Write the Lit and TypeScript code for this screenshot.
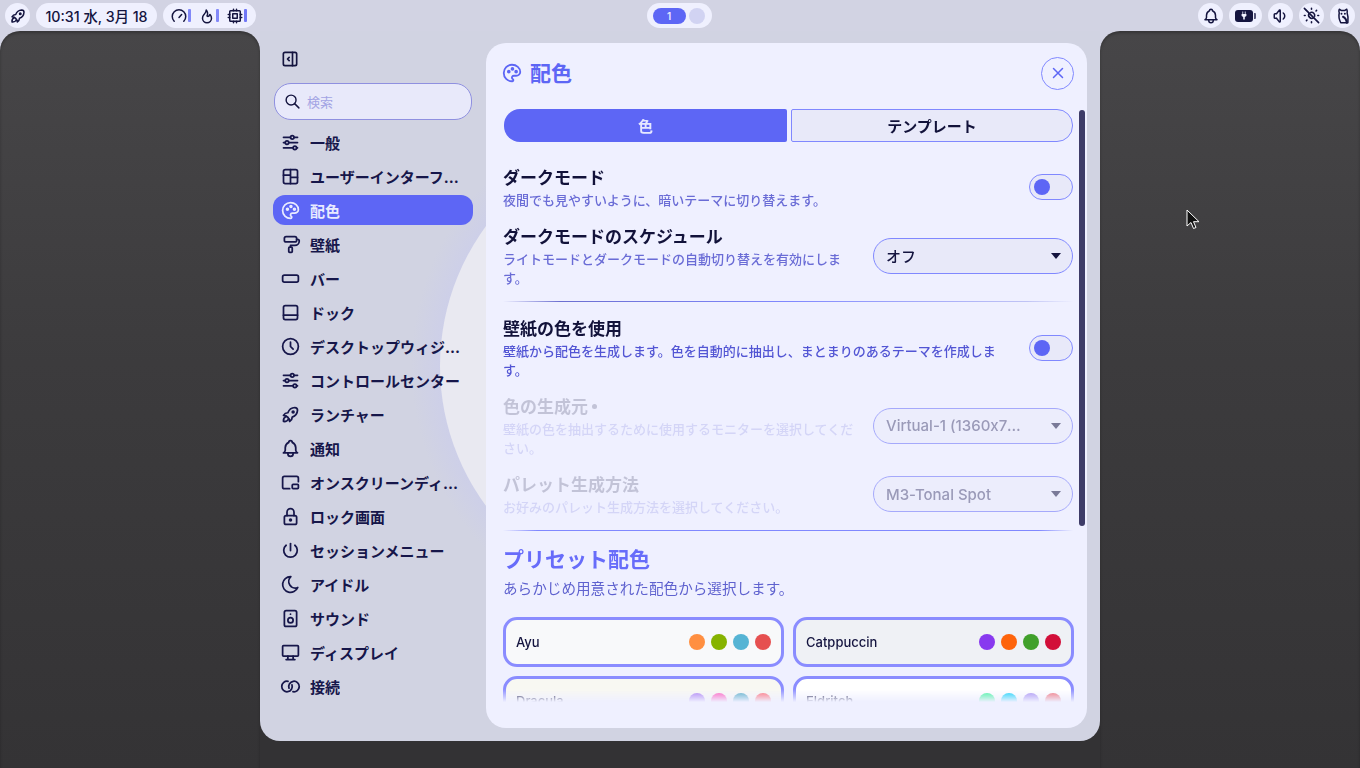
import { LitElement, html, css, svg } from "lit";
import { customElement } from "lit/decorators.js";

const ic: Record<string, any> = {
  rocket: svg`<path d="M4 13a8 8 0 0 1 7 7a6 6 0 0 0 3 -5a9 9 0 0 0 6 -8a3 3 0 0 0 -3 -3a9 9 0 0 0 -8 6a6 6 0 0 0 -5 3"/><path d="M7 14a6 6 0 0 0 -3 6a6 6 0 0 0 6 -3"/><path d="M15 9m-1 0a1 1 0 1 0 2 0a1 1 0 1 0 -2 0"/>`,
  gauge: svg`<path d="M5.6 19a9 9 0 1 1 12.8 0"/><path d="M12 14l3.5 -4"/>`,
  flame: svg`<path d="M12 12c2 -2.96 0 -7 -1 -8c0 3.038 -1.773 4.741 -3 6c-1.226 1.26 -2 3.24 -2 5a6 6 0 1 0 12 0c0 -1.532 -1.056 -3.94 -2 -5c-1.786 3 -2.791 3 -4 2z"/>`,
  cpu: svg`<path d="M5 5m0 1a1 1 0 0 1 1 -1h12a1 1 0 0 1 1 1v12a1 1 0 0 1 -1 1h-12a1 1 0 0 1 -1 -1z"/><path d="M9 9h6v6h-6z"/><path d="M3 10h2M3 14h2M10 3v2M14 3v2M21 10h-2M21 14h-2M14 21v-2M10 21v-2"/>`,
  bell: svg`<path d="M10 5a2 2 0 1 1 4 0a7 7 0 0 1 4 6v3a4 4 0 0 0 2 3h-16a4 4 0 0 0 2 -3v-3a7 7 0 0 1 4 -6"/><path d="M9 17v1a3 3 0 0 0 6 0v-1"/>`,
  volume: svg`<path d="M15 8a5 5 0 0 1 0 8"/><path d="M6 15h-2a1 1 0 0 1 -1 -1v-4a1 1 0 0 1 1 -1h2l3.5 -4.5a.8 .8 0 0 1 1.5 .5v14a.8 .8 0 0 1 -1.5 .5l-3.5 -4.5"/>`,
  sunoff: svg`<path d="M3 3l18 18"/><path d="M9.2 9.2a4 4 0 0 0 5.6 5.6M11 8.1a4 4 0 0 1 4.9 4.9"/><path d="M12 3v1M12 20v1M3 12h1M20 12h1M5.6 18.4l.7 -.7M17.7 6.3l.7 -.7M5.6 5.6l0 0"/>`,
  owl: svg`<path d="M7 3l2.5 1.500h5L17 3c1 2 1 3 .5 5c1.500 4 1.500 9 1 13H9c-2 -4 -3 -9 -2 -13c-.7 -2 -.8 -3.500 0 -5z"/><path d="M10 9h.01M14.500 9h.01M12 13c2.500 1 4.500 4 5 8" stroke-width="2.600"/>`,
  sliders: svg`<path d="M14 6m-2 0a2 2 0 1 0 4 0a2 2 0 1 0 -4 0"/><path d="M4 6l8 0M16 6l4 0"/><path d="M8 12m-2 0a2 2 0 1 0 4 0a2 2 0 1 0 -4 0"/><path d="M4 12l2 0M10 12l10 0"/><path d="M17 18m-2 0a2 2 0 1 0 4 0a2 2 0 1 0 -4 0"/><path d="M4 18l11 0M19 18l1 0"/>`,
  layout: svg`<rect x="4" y="4" width="16" height="16" rx="2"/><path d="M12 4v16M4 10.500h8M12 13h8"/>`,
  palette: svg`<path d="M12 21a9 9 0 0 1 0 -18c4.970 0 9 3.582 9 8c0 1.060 -.474 2.078 -1.318 2.828c-.844 .75 -1.989 1.172 -3.182 1.172h-2.500a2 2 0 0 0 -1 3.750a1.300 1.300 0 0 1 -1 2.250"/><path d="M8.500 10.500m-1 0a1 1 0 1 0 2 0a1 1 0 1 0 -2 0"/><path d="M12.500 7.500m-1 0a1 1 0 1 0 2 0a1 1 0 1 0 -2 0"/><path d="M16.500 10.500m-1 0a1 1 0 1 0 2 0a1 1 0 1 0 -2 0"/>`,
  roller: svg`<path d="M5 3m0 2a2 2 0 0 1 2 -2h10a2 2 0 0 1 2 2v2a2 2 0 0 1 -2 2h-10a2 2 0 0 1 -2 -2z"/><path d="M19 6h1a2 2 0 0 1 2 2a5 5 0 0 1 -5 5h-5v2"/><path d="M10 15m0 1a1 1 0 0 1 1 -1h2a1 1 0 0 1 1 1v4a1 1 0 0 1 -1 1h-2a1 1 0 0 1 -1 -1z"/>`,
  bar: svg`<rect x="3" y="8" width="18" height="8" rx="2"/>`,
  dock: svg`<rect x="4" y="4" width="16" height="16" rx="2"/><path d="M4 15h16"/>`,
  clock: svg`<circle cx="12" cy="12" r="9"/><path d="M12 7v5l3 3"/>`,
  osd: svg`<path d="M11 19h-6a2 2 0 0 1 -2 -2v-10a2 2 0 0 1 2 -2h14a2 2 0 0 1 2 2v4"/><path d="M14 14m0 1a1 1 0 0 1 1 -1h5a1 1 0 0 1 1 1v3a1 1 0 0 1 -1 1h-5a1 1 0 0 1 -1 -1z"/>`,
  lock: svg`<path d="M5 13a2 2 0 0 1 2 -2h10a2 2 0 0 1 2 2v6a2 2 0 0 1 -2 2h-10a2 2 0 0 1 -2 -2v-6z"/><path d="M11 16a1 1 0 1 0 2 0a1 1 0 0 0 -2 0"/><path d="M8 11v-4a4 4 0 1 1 8 0v4"/>`,
  power: svg`<path d="M7 6a7.750 7.750 0 1 0 10 0"/><path d="M12 4l0 8"/>`,
  moon: svg`<path d="M12 3c.132 0 .263 0 .393 0a7.500 7.500 0 0 0 7.920 12.446a9 9 0 1 1 -8.313 -12.454z"/>`,
  speaker: svg`<path d="M5 3m0 2a2 2 0 0 1 2 -2h10a2 2 0 0 1 2 2v14a2 2 0 0 1 -2 2h-10a2 2 0 0 1 -2 -2z"/><path d="M12 14m-3 0a3 3 0 1 0 6 0a3 3 0 1 0 -6 0"/><path d="M12 7l0 .01"/>`,
  desktop: svg`<path d="M3 5a1 1 0 0 1 1 -1h16a1 1 0 0 1 1 1v10a1 1 0 0 1 -1 1h-16a1 1 0 0 1 -1 -1v-10z"/><path d="M7 20h10M9 16v4M15 16v4"/>`,
  link: svg`<path d="M9.183 6.117a6 6 0 1 0 4.511 3.986"/><path d="M14.813 17.883a6 6 0 1 0 -4.496 -3.954"/>`,
  collapse: svg`<path d="M4 4m0 2a2 2 0 0 1 2 -2h12a2 2 0 0 1 2 2v12a2 2 0 0 1 -2 2h-12a2 2 0 0 1 -2 -2z"/><path d="M15 4v16M11 10l-2 2l2 2"/>`,
  search: svg`<path d="M10 10m-7 0a7 7 0 1 0 14 0a7 7 0 1 0 -14 0"/><path d="M21 21l-6 -6"/>`,
  x: svg`<path d="M18 6l-12 12M6 6l12 12"/>`,
};

const icon = (n: string, size = 21) =>
  html`<svg class="ico" width=${size} height=${size} viewBox="0 0 24 24" fill="none" stroke="currentColor" stroke-width="2" stroke-linecap="round" stroke-linejoin="round">${ic[n]}</svg>`;

const nav: [string, string][] = [
  ["sliders", "一般"],
  ["layout", "ユーザーインターフェース"],
  ["palette", "配色"],
  ["roller", "壁紙"],
  ["bar", "バー"],
  ["dock", "ドック"],
  ["clock", "デスクトップウィジェット"],
  ["sliders", "コントロールセンター"],
  ["rocket", "ランチャー"],
  ["bell", "通知"],
  ["osd", "オンスクリーンディスプレイ"],
  ["lock", "ロック画面"],
  ["power", "セッションメニュー"],
  ["moon", "アイドル"],
  ["speaker", "サウンド"],
  ["desktop", "ディスプレイ"],
  ["link", "接続"],
];

const presets: [string, string, string[]][] = [
  ["Ayu", "#f8f9fa", ["#ff8f40", "#86b300", "#55b4d4", "#e65050"]],
  ["Catppuccin", "#eff1f5", ["#8839ef", "#fe640b", "#40a02b", "#d20f39"]],
  ["Dracula", "#f8f8f2", ["#a97cf2", "#ff55bb", "#4fa9c4", "#ff6670"]],
  ["Eldritch", "#ffffff", ["#37f499", "#04d1f9", "#a48cf2", "#f16c75"]],
];

@customElement("app-root")
export class AppRoot extends LitElement {
  static styles = css`
    :host {
      display: block;
      position: relative;
      width: 1360px;
      height: 768px;
      overflow: hidden;
      background: #d2d3e3;
      color: #14143f;
      font-family: Inter, "Noto Sans CJK JP", sans-serif;
    }
    .ico { display: block; flex: none; }

    /* top bar */
    .bar {
      height: 31px;
      display: grid;
      grid-template-columns: 1fr auto 1fr;
      align-items: start;
      padding: 3px 5px 0;
      box-sizing: border-box;
    }
    .bar-l, .bar-r { display: flex; gap: 6px; }
    .bar-r { justify-content: flex-end; }
    .pill {
      height: 25px;
      min-width: 25px;
      border-radius: 13px;
      background: #eff0fe;
      display: flex;
      align-items: center;
      justify-content: center;
      box-sizing: border-box;
    }
    .time { width: 121px; font-size: 14.25px; font-weight: 500; white-space: nowrap; }
    .sys { width: 93px; justify-content: flex-start; padding-left: 7px; }
    .meter { width: 3px; height: 13px; background: #8288f8; border-radius: 1px; margin-right: 7px; }
    .meter.last { margin-right: 0; background: #6f76f6; }
    .ws { width: 65px; gap: 3px; padding: 0 7px 0 6px; margin-left: -1px; margin-right: 1px; }
    .ws-on {
      width: 33px; height: 16px; border-radius: 8px; background: #5d66f5; color: #e6e8ff;
      font-size: 10px; font-weight: 600; display: flex; align-items: center; justify-content: center;
    }
    .ws-off { width: 16px; height: 16px; border-radius: 50%; background: #d1d3f2; }
    .batt { width: 33px; }
    .batt-body {
      width: 18px; height: 12px; background: #14143f; border-radius: 3px; color: #eff0fe;
      display: flex; align-items: center; justify-content: center;
    }
    .batt-nub { width: 2px; height: 6px; background: #55557a; margin-left: 1px; border-radius: 0 1px 1px 0; }

    /* stage */
    .stage { display: grid; grid-template-columns: 260px 840px 260px; height: 737px; }
    .desk {
      background: linear-gradient(180deg, #474648 0%, #3c3b3d 45%, #343335 100%);
      border-radius: 20px 20px 0 0;
      box-shadow: inset 0 2px 3px rgba(0,0,0,.25);
    }
    .mid { background: #333234; }
    .win {
      position: relative;
      height: 710px;
      background: #d1d3e2;
      border-radius: 0 0 20px 20px;
      overflow: hidden;
      display: grid;
      grid-template-columns: 226px 601px;
    }
    .halo {
      position: absolute;
      left: 151px; top: 70px;
      width: 530px; height: 530px;
      border-radius: 50%;
      background: radial-gradient(circle closest-side, #cdcfe9 0%, #cdcfe9 88%, rgba(209,211,226,0) 100%);
    }
    .disc {
      position: absolute;
      left: 180px; top: 99px;
      width: 472px; height: 472px;
      border-radius: 50%;
      background: #e9e9f1;
    }

    /* sidebar */
    .side { position: relative; padding: 18px 13px 0 13px; box-sizing: border-box; }
    .collapse { margin: 0 0 14px 7px; height: 20px; }
    .search {
      height: 37px; width: 198px; margin-left: 1px; box-sizing: border-box;
      border: 1px solid #8f90e0; border-radius: 17px; background: #e8e9fa;
      display: flex; align-items: center; gap: 6px; padding-left: 9px;
      font-size: 13px; color: #14143f;
    }
    .search span { color: #a3a4e4; }
    .nav { list-style: none; margin: 5px 0 0; padding: 0; }
    .nav li {
      height: 34px; width: 200px; display: flex; align-items: center; gap: 9px;
      padding: 0 10px 0 7px; box-sizing: border-box;
      font-size: 15px; font-weight: 700; position: relative; color: #16164a;
    }
    .nav li span { overflow: hidden; text-overflow: ellipsis; white-space: nowrap; min-width: 0; }
    .nav li.on { color: #e9ebff; z-index: 0; }
    .nav li.on::before {
      content: ""; position: absolute; inset: 2px 0; background: #5d66f5; border-radius: 12px; z-index: -1;
    }

    /* content */
    .panel {
      position: relative; margin-top: 12px; height: 685px;
      background: #eff0ff; border-radius: 20px; overflow: hidden;
    }
    .head {
      display: flex; align-items: center; justify-content: space-between;
      height: 34px; margin-top: 13px; padding: 0 13px 0 15px;
      color: #5d66f5;
    }
    .head-t { display: flex; align-items: center; gap: 7px; font-size: 21px; font-weight: 700; }
    .head-t span { padding-bottom: 2px; }
    .close {
      width: 33px; height: 33px; border-radius: 50%; border: 1px solid #8088ff;
      box-sizing: border-box; display: flex; align-items: center; justify-content: center;
    }
    .scroll {
      position: absolute; left: 0; top: 66px; height: 593px; overflow: hidden;
      padding-left: 17px; width: 575px;
      -webkit-mask-image: linear-gradient(180deg, #000 0, #000 580px, transparent 593px);
      mask-image: linear-gradient(180deg, #000 0, #000 580px, transparent 593px);
    }
    .thumb {
      position: absolute; left: 593px; top: 67px; width: 6px; height: 416px;
      border-radius: 3px; background: #3e3c68;
    }
    .tabs { display: flex; gap: 4px; width: 569px; height: 33px; margin-left: 1px; }
    .tab {
      flex: 1; box-sizing: border-box; display: flex; align-items: center; justify-content: center;
      font-size: 15px; font-weight: 700;
    }
    .tab.a { background: #5d66f5; color: #e6e8ff; border-radius: 16px 2px 2px 16px; flex: 0 0 283px; }
    .tab.b { background: #e8e9f9; border: 1px solid #8088ff; border-radius: 2px 16px 16px 2px; color: #12123a; }

    .row { display: flex; align-items: center; justify-content: space-between; width: 570px; }
    .txt { min-width: 0; padding-top: 1px; margin-bottom: -1px; }
    .t { font-size: 17px; font-weight: 700; line-height: 25px; color: #12123a; }
    .d { font-size: 13px; font-weight: 500; line-height: 19px; color: #6a6cd6; }
    .txt.strong .d { color: #5255d4; }
    .txt.off { opacity: .2; }
    .dot { display: inline-block; width: 5px; height: 5px; border-radius: 50%; background: currentColor; margin: 0 0 4px 4px; }
    .w-wide { width: 500px; }
    .w-nar { width: 355px; }
    .sw {
      width: 44px; height: 26px; border-radius: 13px; border: 1px solid #8088ff; box-sizing: border-box;
      background: #e8e9f9; display: flex; align-items: center; padding-left: 4px; flex: none;
    }
    .sw i { width: 16px; height: 16px; border-radius: 50%; background: #5d66f5; display: block; }
    .dd {
      width: 200px; height: 36px; border-radius: 18px; border: 1px solid #8088ff; box-sizing: border-box;
      background: #e8e9f9; display: flex; align-items: center; justify-content: space-between;
      padding: 0 11px 0 12px; font-size: 15px; font-weight: 500; flex: none; color: #14143f;
      font-feature-settings: "calt" 0;
    }
    .dd span { max-width: 138px; overflow: hidden; text-overflow: ellipsis; white-space: nowrap; }
    .dd.dim { background: #ecedfc; color: #9a9ab8; border-color: #a5a9fb; }
    .dd .arrow { width: 0; height: 0; border: 5px solid transparent; border-top: 6px solid currentColor; border-bottom: 0; }
    .dd.dim .arrow { color: #7a7a98; }
    .rule { height: 1px; width: 570px; background: linear-gradient(90deg, transparent 0, #8088ff 6%, #8088ff 94%, transparent 100%); }
    .rule.first { background: linear-gradient(90deg, transparent 0, #6c6fd0 10%, #8088ff 50%, #c0c4f5 92%, transparent 100%); }
    .h2 { font-size: 21px; font-weight: 700; line-height: 30px; color: #676cfa; margin-top: 14px; }
    .sub { font-size: 14.6px; line-height: 22px; color: #5f62cf; margin-top: 3px; }
    .grid { display: grid; grid-template-columns: 281px 281px; gap: 9px; margin-top: 17px; width: 571px; }
    .card {
      height: 50px; border: 3px solid #8a8cff; border-radius: 14px; box-sizing: border-box;
      display: flex; align-items: center; justify-content: space-between; padding: 0 10px 0 10px;
      font-size: 13px; font-weight: 500; color: #14143f;
    }
    .dots { display: flex; gap: 6px; }
    .dots i { width: 16px; height: 16px; border-radius: 50%; display: block; }
    .cursor { position: absolute; left: 1186px; top: 209px; }
  `;

  private row(title: any, desc: string, ctrl: any, cls: string, top: number, width: string) {
    return html`<div class="row" style="margin-top:${top}px">
      <div class="txt ${width} ${cls}"><div class="t">${title}</div><div class="d">${desc}</div></div>
      ${ctrl}
    </div>`;
  }

  render() {
    const sw = html`<div class="sw"><i></i></div>`;
    const dd = (t: string, dim = false) =>
      html`<div class="dd ${dim ? "dim" : ""}"><span>${t}</span><div class="arrow"></div></div>`;
    return html`
      <div class="bar">
        <div class="bar-l">
          <div class="pill">${icon("rocket", 18)}</div>
          <div class="pill time">10:31 水, 3月 18</div>
          <div class="pill sys">
            ${icon("gauge", 18)}<div class="meter"></div>
            ${icon("flame", 18)}<div class="meter"></div>
            ${icon("cpu", 18)}<div class="meter last"></div>
          </div>
        </div>
        <div class="pill ws"><div class="ws-on">1</div><div class="ws-off"></div></div>
        <div class="bar-r">
          <div class="pill">${icon("bell", 18)}</div>
          <div class="pill batt">
            <div class="batt-body">
              <svg width="8" height="9" viewBox="0 0 10 10" fill="currentColor"><path d="M3 0h1v3h2V0h1v3h1v2.500L6 7v3H4V7L2 5.500V3h1z"/></svg>
            </div>
            <div class="batt-nub"></div>
          </div>
          <div class="pill">${icon("volume", 18)}</div>
          <div class="pill">${icon("sunoff", 19)}</div>
          <div class="pill">${icon("owl", 18)}</div>
        </div>
      </div>
      <div class="stage">
        <div class="desk"></div>
        <div class="mid">
          <div class="win">
            <div class="halo"></div>
            <div class="disc"></div>
            <div class="side">
              <div class="collapse">${icon("collapse", 20)}</div>
              <div class="search">${icon("search", 17)}<span>検索</span></div>
              <ul class="nav">
                ${nav.map(
                  ([i, t], n) => html`<li class=${n === 2 ? "on" : ""}>${icon(i)}<span>${t}</span></li>`
                )}
              </ul>
            </div>
            <div class="panel">
              <div class="head">
                <div class="head-t">${icon("palette", 22)}<span>配色</span></div>
                <div class="close">${icon("x", 18)}</div>
              </div>
              <div class="scroll">
                <div class="tabs"><div class="tab a">色</div><div class="tab b">テンプレート</div></div>
                ${this.row("ダークモード", "夜間でも見やすいように、暗いテーマに切り替えます。", sw, "", 23, "w-wide")}
                ${this.row("ダークモードのスケジュール", "ライトモードとダークモードの自動切り替えを有効にします。", dd("オフ"), "", 15, "w-nar")}
                <div class="rule first" style="margin-top:14px"></div>
                ${this.row("壁紙の色を使用", "壁紙から配色を生成します。色を自動的に抽出し、まとまりのあるテーマを作成します。", sw, "strong", 14, "w-wide")}
                ${this.row(html`色の生成元<span class="dot"></span>`, "壁紙の色を抽出するために使用するモニターを選択してください。", dd("Virtual-1 (1360x768)", true), "off", 15, "w-nar")}
                ${this.row("パレット生成方法", "お好みのパレット生成方法を選択してください。", dd("M3-Tonal Spot", true), "off", 15, "w-nar")}
                <div class="rule" style="margin-top:14px"></div>
                <div class="h2">プリセット配色</div>
                <div class="sub">あらかじめ用意された配色から選択します。</div>
                <div class="grid">
                  ${presets.map(
                    ([name, bg, cols]) => html`<div class="card" style="background:${bg}">
                      <span>${name}</span>
                      <div class="dots">${cols.map((c) => html`<i style="background:${c}"></i>`)}</div>
                    </div>`
                  )}
                </div>
              </div>
              <div class="thumb"></div>
            </div>
          </div>
        </div>
        <div class="desk"></div>
      </div>
      <svg class="cursor" width="14" height="22" viewBox="0 0 14 22"><path d="M1 1v16l4-3.500 2.500 6 2.500-1-2.500-5.800H13z" fill="#111" stroke="#fff" stroke-width="1"/></svg>
    `;
  }
}
